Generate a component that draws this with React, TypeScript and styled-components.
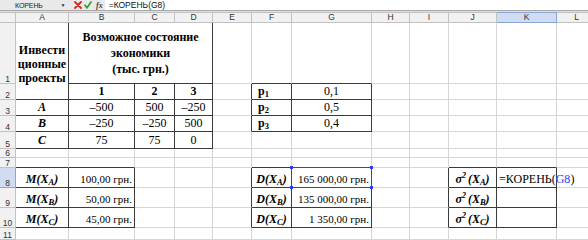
import React from 'react'
import styled, { createGlobalStyle } from 'styled-components'

const DARK = '#3a3a3a'
const GRID = '#d6d6d6'
const BLUE = '#2a3fe6'

const GlobalStyle = createGlobalStyle`
  html, body {
    margin: 0;
    padding: 0;
    background: #fff;
    overflow: hidden;
  }
  body {
    width: 588px;
    height: 240px;
  }
`

type Align = 'left' | 'center' | 'right'

interface Spec {
  content?: React.ReactNode
  align?: Align
  bold?: boolean
  italic?: boolean
  size?: number
  rowSpan?: number
  colSpan?: number
  middle?: boolean
  lineHeight?: number
  padLeft?: number
  padTop?: number
  selected?: boolean
  editing?: boolean
}

const COLS = ['A', 'B', 'C', 'D', 'E', 'F', 'G', 'H', 'I', 'J', 'K', 'L']
const COL_WIDTHS = [53, 66, 40, 38, 39, 40, 80, 38, 39, 48, 60, 40]
const ROW_HEIGHTS = [61, 16, 16, 16, 17, 9, 10, 20, 20, 20, 12]
const ACTIVE_COL = 'K'
const ACTIVE_ROW = 8

const BOXES = [
  { r1: 1, r2: 5, c1: 0, c2: 3 },
  { r1: 2, r2: 4, c1: 5, c2: 6 },
  { r1: 8, r2: 10, c1: 0, c2: 1 },
  { r1: 8, r2: 10, c1: 5, c2: 6 },
  { r1: 8, r2: 10, c1: 9, c2: 10 }
]

const boxed = (r: number, c: number) => BOXES.some((b) => r >= b.r1 && r <= b.r2 && c >= b.c1 && c <= b.c2)

const Sub = styled.sub`
  font-size: 8.5px;
  vertical-align: -2px;
  line-height: 0;
`

const Sup = styled.sup`
  font-size: 8px;
  vertical-align: 5px;
  line-height: 0;
  margin-right: 2px;
`

const Ref = styled.span`
  color: ${BLUE};
`

const Line = styled.span`
  display: block;
`

const fn = (name: string, s: string) => (
  <>
    {name}(X<Sub>{s}</Sub>)
  </>
)

const sigma = (s: string) => (
  <>
    σ<Sup>2</Sup>(X<Sub>{s}</Sub>)
  </>
)

const p = (n: string) => (
  <>
    p<Sub>{n}</Sub>
  </>
)

const num = (v: string): Spec => ({ content: v, align: 'center' })
const money = (v: string): Spec => ({ content: v, align: 'right', size: 11 })
const label = (content: React.ReactNode): Spec => ({ content, align: 'center', bold: true, italic: true })
const prob = (n: string): Spec => ({ content: p(n), align: 'left', bold: true, padLeft: 6 })

const SPECS: Record<string, Spec> = {
  A1: {
    content: (
      <>
        <Line>Инвести</Line>
        <Line>ционные</Line>
        <Line>проекты</Line>
      </>
    ),
    align: 'center',
    bold: true,
    rowSpan: 2,
    middle: true,
    lineHeight: 14,
    padTop: 7
  },
  B1: {
    content: (
      <>
        <Line>Возможное состояние</Line>
        <Line>экономики</Line>
        <Line>(тыс. грн.)</Line>
      </>
    ),
    align: 'center',
    bold: true,
    colSpan: 3,
    middle: true,
    lineHeight: 16,
    padTop: 1
  },
  B2: { content: '1', align: 'center', bold: true },
  C2: { content: '2', align: 'center', bold: true },
  D2: { content: '3', align: 'center', bold: true },
  F2: prob('1'),
  G2: num('0,1'),
  A3: label('A'),
  B3: num('–500'),
  C3: num('500'),
  D3: num('–250'),
  F3: prob('2'),
  G3: num('0,5'),
  A4: label('B'),
  B4: num('–250'),
  C4: num('–250'),
  D4: num('500'),
  F4: prob('3'),
  G4: num('0,4'),
  A5: label('C'),
  B5: num('75'),
  C5: num('75'),
  D5: num('0'),
  A8: label(fn('M', 'A')),
  B8: money('100,00 грн.'),
  F8: label(fn('D', 'A')),
  G8: { ...money('165 000,00 грн.'), selected: true },
  J8: label(sigma('A')),
  K8: {
    content: (
      <>
        =КОРЕНЬ(<Ref>G8</Ref>)
      </>
    ),
    align: 'left',
    editing: true
  },
  A9: label(fn('M', 'B')),
  B9: money('50,00 грн.'),
  F9: label(fn('D', 'B')),
  G9: money('135 000,00 грн.'),
  J9: label(sigma('B')),
  A10: label(fn('M', 'C')),
  B10: money('45,00 грн.'),
  F10: label(fn('D', 'C')),
  G10: money('1 350,00 грн.'),
  J10: label(sigma('C'))
}

const Page = styled.div`
  width: 588px;
  height: 240px;
  overflow: hidden;
  display: flex;
  flex-direction: column;
  background: #fff;
`

const Toolbar = styled.div`
  display: flex;
  align-items: stretch;
  height: 11px;
  background: #e9e9e9;
  border-bottom: 1px solid #a9a9a9;
  font-family: 'Liberation Sans', Arial, sans-serif;
  color: #222;
`

const ToolbarGap = styled.div`
  height: 1px;
  background: #dedede;
`

const NameBox = styled.div`
  width: 58px;
  box-sizing: border-box;
  padding-left: 15px;
  display: flex;
  align-items: center;
  font-size: 7px;
  letter-spacing: -0.1px;
`

const DropArrow = styled.div`
  width: 10px;
  display: flex;
  align-items: center;
  justify-content: center;
  font-size: 5px;
  color: #333;
`

const ToolIcon = styled.div<{ $gap: number }>`
  display: flex;
  align-items: center;
  margin-left: ${(p) => p.$gap}px;
`

const Fx = styled.span`
  font-family: 'Liberation Serif', serif;
  font-style: italic;
  font-weight: bold;
  font-size: 8px;
  color: #444;
`

const FormulaField = styled.div`
  flex: 1;
  margin-left: 2px;
  background: #fff;
  display: flex;
  align-items: center;
  padding-left: 4px;
  font-size: 8.5px;
  color: #111;
`

const Sheet = styled.div`
  display: grid;
  grid-template-columns: 16px ${COL_WIDTHS.map((w) => `${w}px`).join(' ')};
  grid-template-rows: 11px ${ROW_HEIGHTS.map((h) => `${h}px`).join(' ')};
`

const HeaderBase = styled.div<{ $active?: boolean }>`
  box-sizing: border-box;
  display: flex;
  font-family: 'Liberation Sans', Arial, sans-serif;
  font-size: 8.5px;
  line-height: 9px;
  color: #333;
  background: ${(p) => (p.$active ? '#cfdcf2' : '#f1f1f1')};
  border-right: 1px solid ${(p) => (p.$active ? '#8aa6d6' : '#c2c2c2')};
  border-bottom: 1px solid ${(p) => (p.$active ? '#8aa6d6' : '#c2c2c2')};
`

const Corner = styled(HeaderBase)`
  border-top: 1px solid #c2c2c2;
`

const ColHeader = styled(HeaderBase)`
  justify-content: center;
  align-items: center;
  border-top: 1px solid ${(p) => (p.$active ? '#8aa6d6' : '#c2c2c2')};
`

const RowHeader = styled(HeaderBase)`
  justify-content: center;
  align-items: flex-end;
  line-height: 8px;
`

const justify: Record<Align, string> = { left: 'flex-start', center: 'center', right: 'flex-end' }

const Cell = styled.div<{
  $right: boolean
  $bottom: boolean
  $align: Align
  $bold: boolean
  $italic: boolean
  $size: number
  $middle: boolean
  $lineHeight: number
  $padLeft: number
  $padTop: number
  $colSpan: number
  $rowSpan: number
  $layer: number
}>`
  position: relative;
  box-sizing: border-box;
  grid-column: span ${(p) => p.$colSpan};
  grid-row: span ${(p) => p.$rowSpan};
  display: flex;
  flex-direction: column;
  justify-content: ${(p) => (p.$middle ? 'center' : 'flex-end')};
  align-items: ${(p) => justify[p.$align]};
  text-align: ${(p) => p.$align};
  padding: ${(p) => p.$padTop}px 2px 1px ${(p) => p.$padLeft}px;
  border-right: 1px solid ${(p) => (p.$right ? DARK : GRID)};
  border-bottom: 1px solid ${(p) => (p.$bottom ? DARK : GRID)};
  background: #fff;
  font-family: 'Liberation Serif', 'Times New Roman', serif;
  font-size: ${(p) => p.$size}px;
  font-weight: ${(p) => (p.$bold ? 'bold' : 'normal')};
  font-style: ${(p) => (p.$italic ? 'italic' : 'normal')};
  line-height: ${(p) => p.$lineHeight}px;
  color: #000;
  white-space: nowrap;
  z-index: ${(p) => p.$layer};
`

const SelectionFrame = styled.div`
  position: absolute;
  left: -1px;
  top: -1px;
  right: -1px;
  bottom: -1px;
  border: 1px solid ${BLUE};
  pointer-events: none;
`

const Handle = styled.div<{ $x: 'left' | 'right'; $y: 'top' | 'bottom' }>`
  position: absolute;
  width: 3px;
  height: 3px;
  background: ${BLUE};
  ${(p) => p.$x}: -2px;
  ${(p) => p.$y}: -2px;
`

const CrossIcon = () => (
  <svg width="8" height="8" viewBox="0 0 8 8">
    <path d="M1 1 L7 7 M7 1 L1 7" stroke="#d42a22" strokeWidth="1.8" strokeLinecap="round" />
  </svg>
)

const CheckIcon = () => (
  <svg width="8" height="8" viewBox="0 0 8 8">
    <path d="M1 4.2 L3 6.8 L7 1" stroke="#2f9a2f" strokeWidth="1.6" fill="none" strokeLinecap="round" />
  </svg>
)

const rowCount = ROW_HEIGHTS.length

// ячейки, перекрытые объединёнными
const covered = new Set<string>()
Object.entries(SPECS).forEach(([key, spec]) => {
  const c = COLS.indexOf(key[0])
  const r = Number(key.slice(1))
  for (let dr = 0; dr < (spec.rowSpan ?? 1); dr++) {
    for (let dc = 0; dc < (spec.colSpan ?? 1); dc++) {
      if (dr || dc) covered.add(`${COLS[c + dc]}${r + dr}`)
    }
  }
})

const renderCell = (r: number, c: number) => {
  const key = `${COLS[c]}${r}`
  if (covered.has(key)) return null
  const spec = SPECS[key] ?? {}
  const lastC = c + (spec.colSpan ?? 1) - 1
  const lastR = r + (spec.rowSpan ?? 1) - 1
  return (
    <Cell
      key={key}
      $right={boxed(r, lastC) || boxed(r, lastC + 1)}
      $bottom={boxed(lastR, c) || boxed(lastR + 1, c)}
      $align={spec.align ?? 'left'}
      $bold={!!spec.bold}
      $italic={!!spec.italic}
      $size={spec.size ?? 12}
      $middle={!!spec.middle}
      $lineHeight={spec.lineHeight ?? 14}
      $padLeft={spec.padLeft ?? 2}
      $padTop={spec.padTop ?? 0}
      $colSpan={spec.colSpan ?? 1}
      $rowSpan={spec.rowSpan ?? 1}
      $layer={spec.editing ? 2 : spec.selected ? 1 : 0}
    >
      {spec.content && <span>{spec.content}</span>}
      {spec.selected && (
        <SelectionFrame>
          <Handle $x="left" $y="top" />
          <Handle $x="right" $y="top" />
          <Handle $x="left" $y="bottom" />
          <Handle $x="right" $y="bottom" />
        </SelectionFrame>
      )}
    </Cell>
  )
}

export default function App() {
  return (
    <Page>
      <GlobalStyle />
      <Toolbar>
        <NameBox>КОРЕНЬ</NameBox>
        <DropArrow>▼</DropArrow>
        <ToolIcon $gap={6}>
          <CrossIcon />
        </ToolIcon>
        <ToolIcon $gap={2}>
          <CheckIcon />
        </ToolIcon>
        <ToolIcon $gap={4}>
          <Fx>fx</Fx>
        </ToolIcon>
        <FormulaField>=КОРЕНЬ(G8)</FormulaField>
      </Toolbar>
      <ToolbarGap />
      <Sheet>
        <Corner />
        {COLS.map((col) => (
          <ColHeader key={col} $active={col === ACTIVE_COL}>
            {col}
          </ColHeader>
        ))}
        {Array.from({ length: rowCount }, (_, i) => i + 1).map((r) => (
          <React.Fragment key={r}>
            <RowHeader $active={r === ACTIVE_ROW}>{r}</RowHeader>
            {COLS.map((_, c) => renderCell(r, c))}
          </React.Fragment>
        ))}
      </Sheet>
    </Page>
  )
}
